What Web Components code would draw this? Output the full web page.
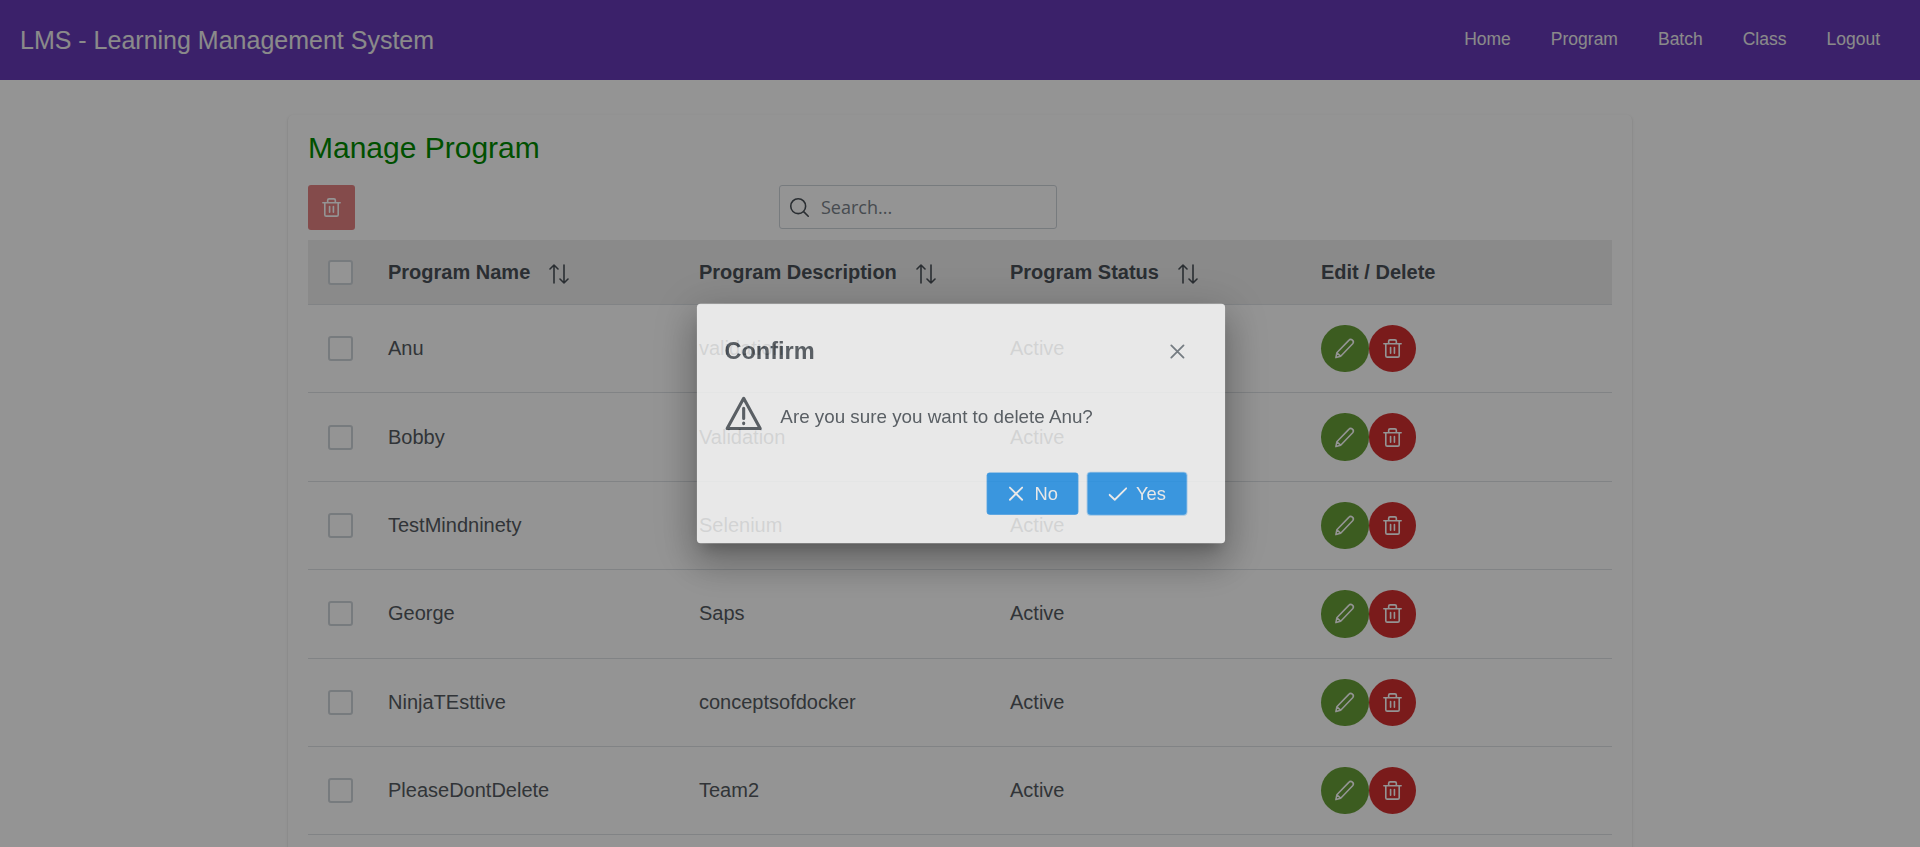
<!DOCTYPE html>
<html lang="en">
<head>
<meta charset="utf-8">
<title>LMS - Learning Management System</title>
<style>
    html, body {
        margin: 0;
        height: 847px;
        overflow: hidden;
        background: #fff;
        font-family: "Liberation Sans", Arial, sans-serif;
        color: #495057;
    }
</style>
</head>
<body>
<lms-navbar>
    <a slot="links">Home</a>
    <a slot="links">Program</a>
    <a slot="links">Batch</a>
    <a slot="links">Class</a>
    <a slot="links">Logout</a>
</lms-navbar>
<manage-program></manage-program>
<confirm-dialog name="Anu"></confirm-dialog>

<script>
const icons = {
    trash: `<svg viewBox="0 0 24 24" fill="none" stroke="currentColor" stroke-width="1.7" stroke-linecap="round" stroke-linejoin="round"><path d="M3 7h18M8 7V4.500A1.500 1.500 0 0 1 9.500 3h5A1.500 1.500 0 0 1 16 4.500V7M5 7v12.500A1.500 1.500 0 0 0 6.500 21h11a1.500 1.500 0 0 0 1.500-1.500V7M10 11v6M14 11v6"/></svg>`,
    pencil: `<svg viewBox="0 0 24 24" fill="none" stroke="currentColor" stroke-width="1.600" stroke-linecap="round" stroke-linejoin="round"><path d="M16.500 3.500a2.500 2.500 0 0 1 4 3.500L8 20l-5 1.500L4 16.500ZM4 16.500 8 20"/></svg>`,
    search: `<svg viewBox="0 0 24 24" fill="none" stroke="currentColor" stroke-width="1.800" stroke-linecap="round"><circle cx="10.500" cy="10.500" r="8.500"/><path d="m17 17 5 5"/></svg>`,
    close: `<svg viewBox="0 0 24 24" fill="none" stroke="currentColor" stroke-width="2.400" stroke-linecap="round"><path d="M4 4l16 16M20 4 4 20"/></svg>`,
    check: `<svg viewBox="0 0 24 24" fill="none" stroke="currentColor" stroke-width="2.400" stroke-linecap="round" stroke-linejoin="round"><path d="M1 13.500 8 20 23 5"/></svg>`,
    warning: `<svg viewBox="0 0 40 40" fill="none" stroke="currentColor" stroke-width="3.400" stroke-linejoin="round" stroke-linecap="round"><path d="M20 3 2 36h36Z"/><path d="M20 14v11M20 30v.6"/></svg>`,
    sort: `<svg viewBox="0 0 20 20" fill="none" stroke="currentColor" stroke-width="1.600" stroke-linecap="round" stroke-linejoin="round"><path d="M5 19V1M1 5l4-4 4 4M15 1v18M11 15l4 4 4-4"/></svg>`
};

customElements.define(
    'lms-navbar',
    class extends HTMLElement {
        constructor() {
            super();
            this.attachShadow({ mode: 'open' }).innerHTML = `<style>
                    :host {
                        display: flex;
                        align-items: center;
                        justify-content: space-between;
                        height: 80px;
                        box-sizing: border-box;
                        padding: 0 40px 0 20px;
                        background: #673ab7;
                        color: #eee;
                    }
                    .title {
                        font-size: 25px;
                        padding-top: 1px;
                    }
                    nav {
                        display: flex;
                        gap: 40px;
                        font-size: 17.500px;
                        padding-bottom: 1px;
                    }
                </style>
                <div class="title">LMS - Learning Management System</div>
                <nav><slot name="links"></slot></nav>`;
        }
    }
);

customElements.define(
    'round-button',
    class extends HTMLElement {
        connectedCallback() {
            if (this.shadowRoot) return;
            this.attachShadow({ mode: 'open' }).innerHTML = `<style>
                    :host {
                        display: inline-flex;
                        align-items: center;
                        justify-content: center;
                        width: 47.500px;
                        height: 47.500px;
                        border-radius: 50%;
                        color: #fff;
                    }
                    :host([kind="edit"]) { background: #689f38; }
                    :host([kind="delete"]) { background: #d32f2f; }
                    svg { width: 23px; height: 23px; display: block; }
                </style>
                ${icons[this.getAttribute('kind') === 'edit' ? 'pencil' : 'trash']}`;
        }
    }
);

customElements.define(
    'row-checkbox',
    class extends HTMLElement {
        constructor() {
            super();
            this.attachShadow({ mode: 'open' }).innerHTML = `<style>
                    :host {
                        display: block;
                        width: 25px;
                        height: 25px;
                        box-sizing: border-box;
                        border: 2px solid #ced4da;
                        border-radius: 3px;
                        background: #fff;
                    }
                </style>`;
        }
    }
);

customElements.define(
    'program-row',
    class extends HTMLElement {
        connectedCallback() {
            if (this.shadowRoot) return;
            this.attachShadow({ mode: 'open' }).innerHTML = `<style>
                    :host {
                        display: grid;
                        grid-template-columns: 64px 311px 311px 311px 1fr;
                        align-items: center;
                        height: 88.400px;
                        box-sizing: border-box;
                        border-bottom: 1px solid #dee2e6;
                        font-size: 20px;
                        color: #555b61;
                    }
                    row-checkbox { margin-left: 20px; }
                    div { padding-left: 16px; }
                    .actions { display: flex; }
                </style>
                <row-checkbox></row-checkbox>
                <div>${this.getAttribute('name')}</div>
                <div>${this.getAttribute('description')}</div>
                <div>Active</div>
                <div class="actions">
                    <round-button kind="edit"></round-button>
                    <round-button kind="delete"></round-button>
                </div>`;
        }
    }
);

customElements.define(
    'manage-program',
    class extends HTMLElement {
        constructor() {
            super();
            const rows = [
                ['Anu', 'validation'],
                ['Bobby', 'Validation'],
                ['TestMindninety', 'Selenium'],
                ['George', 'Saps'],
                ['NinjaTEsttive', 'conceptsofdocker'],
                ['PleaseDontDelete', 'Team2']
            ];
            const heading = text => `<div class="sortable">${text}${icons.sort}</div>`;

            this.attachShadow({ mode: 'open' }).innerHTML = `<style>
                    :host {
                        display: block;
                        width: 1344px;
                        height: 900px;
                        box-sizing: border-box;
                        margin: 35px 0 0 288px;
                        padding: 15px 20px 20px;
                        border-radius: 5px;
                        background: #fff;
                        box-shadow: 0 2px 1px -1px rgba(0, 0, 0, .2), 0 1px 1px 0 rgba(0, 0, 0, .14), 0 1px 3px 0 rgba(0, 0, 0, .12);
                    }
                    h1 {
                        margin: 0 0 19px;
                        height: 36px;
                        line-height: 36px;
                        font-size: 30px;
                        font-weight: 400;
                        color: #008a00;
                    }
                    .toolbar {
                        display: flex;
                        height: 45px;
                        margin-bottom: 10px;
                    }
                    .bulk-delete {
                        display: flex;
                        align-items: center;
                        justify-content: center;
                        width: 47px;
                        height: 45px;
                        border-radius: 3px;
                        background: #d32f2f;
                        color: #fff;
                        opacity: .6;
                    }
                    .bulk-delete svg { width: 23px; height: 23px; }
                    .search {
                        display: flex;
                        align-items: center;
                        gap: 11px;
                        width: 278px;
                        height: 44px;
                        box-sizing: border-box;
                        margin-left: 424px;
                        padding-left: 9px;
                        border: 1px solid #ced4da;
                        border-radius: 3px;
                        font: 18px "Open Sans", sans-serif;
                        color: #7a828a;
                    }
                    .search svg { width: 21px; height: 21px; color: #495057; }
                    .head {
                        display: grid;
                        grid-template-columns: 64px 311px 311px 311px 1fr;
                        align-items: center;
                        height: 65px;
                        box-sizing: border-box;
                        border-bottom: 1px solid #dee2e6;
                        background: #eee;
                        font-size: 20px;
                        font-weight: 700;
                        color: #495057;
                    }
                    .head row-checkbox { margin-left: 20px; }
                    .head div { padding-left: 16px; }
                    .sortable {
                        display: flex;
                        align-items: center;
                        gap: 19px;
                    }
                    .sortable svg { width: 20px; height: 20px; flex: none; margin-top: 4px; }
                </style>
                <h1>Manage Program</h1>
                <div class="toolbar">
                    <div class="bulk-delete">${icons.trash}</div>
                    <div class="search">${icons.search}<span>Search...</span></div>
                </div>
                <div class="head">
                    <row-checkbox></row-checkbox>
                    ${heading('Program Name')}
                    ${heading('Program Description')}
                    ${heading('Program Status')}
                    <div>Edit / Delete</div>
                </div>
                <div class="rows"></div>`;

            const list = this.shadowRoot.querySelector('.rows');
            for (const [name, description] of rows) {
                const row = document.createElement('program-row');
                row.setAttribute('name', name);
                row.setAttribute('description', description);
                list.appendChild(row);
            }
        }
    }
);

customElements.define(
    'confirm-dialog',
    class extends HTMLElement {
        constructor() {
            super();
            this.attachShadow({ mode: 'open' }).innerHTML = `<style>
                    :host {
                        position: fixed;
                        inset: 0;
                        display: flex;
                        align-items: center;
                        justify-content: center;
                        background: rgba(0, 0, 0, .42);
                    }
                    .dialog {
                        width: 576px;
                        height: 261px;
                        box-sizing: border-box;
                        background: #fff;
                        color: #495057;
                        border-radius: 4px;
                        opacity: .78;
                        transform: translateX(1px) scale(.917);
                        box-shadow: 0 11px 15px -7px rgba(0, 0, 0, .3), 0 24px 38px 3px rgba(0, 0, 0, .22), 0 9px 46px 8px rgba(0, 0, 0, .2);
                    }
                    header, .content, footer { filter: blur(.3px); }
                    header {
                        display: flex;
                        align-items: center;
                        justify-content: space-between;
                        height: 102px;
                        padding: 0 30px 0 30px;
                        box-sizing: border-box;
                        font-size: 25.700px;
                        font-weight: 700;
                    }
                    header span { padding-top: 1px; }
                    header svg { width: 20px; height: 20px; display: block; margin: 1px 12px 0 0; color: #6c757d; }
                    .content {
                        display: flex;
                        align-items: center;
                        gap: 19px;
                        padding: 0 30px 44px;
                        font-size: 20.500px;
                    }
                    .content span { padding-top: 3px; }
                    .content svg { width: 42px; height: 40px; display: block; margin-top: -2px; }
                    footer {
                        display: flex;
                        justify-content: flex-end;
                        gap: 10px;
                        padding: 0 42px 27px 30px;
                    }
                    button {
                        display: flex;
                        align-items: center;
                        gap: 10px;
                        height: 46px;
                        padding: 0 21.500px;
                        border: 1px solid #2196f3;
                        border-radius: 3px;
                        background: #2196f3;
                        color: #fff;
                        font: 20px "Liberation Sans", Arial, sans-serif;
                    }
                    button svg { width: 20px; height: 20px; display: block; }
                    .focus { box-shadow: 0 0 0 1px #a6d5fa; }
                </style>
                <div class="dialog">
                    <header><span>Confirm</span>${icons.close}</header>
                    <div class="content">${icons.warning}<span>Are you sure you want to delete ${this.getAttribute('name')}?</span></div>
                    <footer>
                        <button>${icons.close}No</button>
                        <button class="focus">${icons.check}Yes</button>
                    </footer>
                </div>`;
        }
    }
);
</script>
</body>
</html>
